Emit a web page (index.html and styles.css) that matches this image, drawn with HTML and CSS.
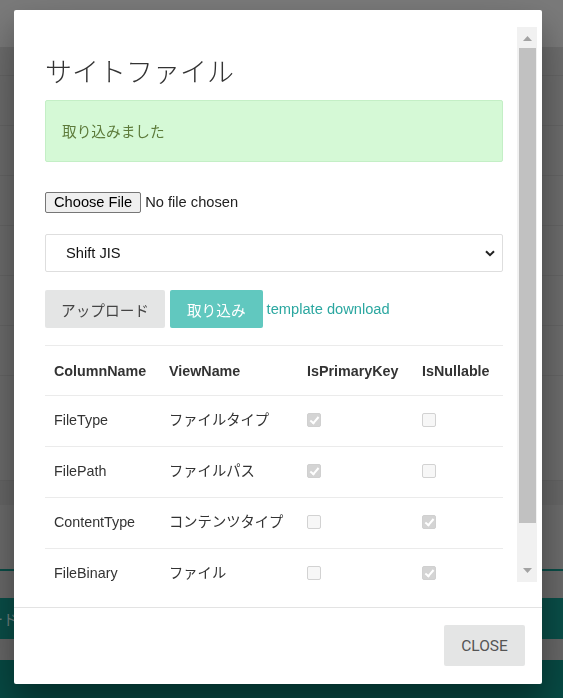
FILE: index.html
```html
<!DOCTYPE html>
<html lang="ja">
<head>
<meta charset="utf-8">
<title>サイトファイル</title>
<link rel="stylesheet" href="styles.css">
</head>
<body>
<div class="page">
  <div class="bg-header"></div>
  <div class="bg-row bg-row-short"></div>
  <div class="bg-row"></div>
  <div class="bg-row"></div>
  <div class="bg-row"></div>
  <div class="bg-row"></div>
  <div class="bg-row"></div>
  <div class="bg-row"></div>
  <div class="bg-gap"></div>
  <div class="bg-band"></div>
  <div class="bg-gap2"></div>
  <div class="bg-tealline"></div>
  <div class="bg-space"></div>
  <div class="bg-button"><span class="bg-button-text">アップロード</span></div>
  <div class="bg-space2"></div>
  <div class="bg-footer"></div>
</div>

<div class="modal">
  <div class="modal-body">
    <div class="scroll-content">
      <h4 class="modal-title">サイトファイル</h4>
      <div class="alert">取り込みました</div>
      <div class="file-row"><input type="file" class="file-input"></div>
      <div class="select-wrap">
        <select class="select">
          <option>Shift JIS</option>
          <option>UTF-8</option>
        </select>
        <svg class="select-arrow" width="10" height="7" viewBox="0 0 10 7"><path d="M1 1.2 L5 5.2 L9 1.2" fill="none" stroke="#222" stroke-width="2"/></svg>
      </div>
      <div class="actions">
        <button class="btn btn-grey">アップロード</button>
        <button class="btn btn-teal">取り込み</button>
        <a class="link" href="#">template download</a>
      </div>
      <table class="cols">
        <thead>
          <tr><th class="c1">ColumnName</th><th class="c2">ViewName</th><th class="c3">IsPrimaryKey</th><th class="c4">IsNullable</th></tr>
        </thead>
        <tbody>
          <tr><td>FileType</td><td>ファイルタイプ</td><td><input type="checkbox" class="cb" checked disabled></td><td><input type="checkbox" class="cb" disabled></td></tr>
          <tr><td>FilePath</td><td>ファイルパス</td><td><input type="checkbox" class="cb" checked disabled></td><td><input type="checkbox" class="cb" disabled></td></tr>
          <tr><td>ContentType</td><td>コンテンツタイプ</td><td><input type="checkbox" class="cb" disabled></td><td><input type="checkbox" class="cb" checked disabled></td></tr>
          <tr><td>FileBinary</td><td>ファイル</td><td><input type="checkbox" class="cb" disabled></td><td><input type="checkbox" class="cb" checked disabled></td></tr>
        </tbody>
      </table>
    </div>
    <div class="scrollbar" aria-hidden="true">
      <div class="sb-btn sb-up"><svg width="9" height="5" viewBox="0 0 9 5"><polygon points="0,5 4.5,0 9,5" fill="#a3a3a3"/></svg></div>
      <div class="sb-track"><div class="sb-thumb"></div></div>
      <div class="sb-btn sb-down"><svg width="9" height="5" viewBox="0 0 9 5"><polygon points="0,0 4.5,5 9,0" fill="#a3a3a3"/></svg></div>
    </div>
  </div>
  <div class="modal-footer">
    <button class="btn-close">Close</button>
  </div>
</div>
</body>
</html>
```

FILE: styles.css
```css
html, body {
  margin: 0;
  padding: 0;
}
body {
  width: 563px;
  height: 698px;
  overflow: hidden;
  background: #6d6d6d;
  font-family: "Liberation Sans", "Noto Sans CJK JP", sans-serif;
  font-size: 14.67px;
  color: #333;
}

/* dimmed page behind the modal */
.page {
  display: flex;
  flex-direction: column;
  height: 698px;
}
.bg-header {
  height: 47px;
  background: #7a7a7a;
  flex: none;
}
.bg-row {
  height: 49px;
  border-bottom: 1px solid #666;
  flex: none;
}
.bg-row-short {
  height: 28px;
}
.bg-gap {
  height: 104px;
  flex: none;
}
.bg-band {
  height: 24px;
  background: #686868;
  border-top: 1px solid #646464;
  flex: none;
}
.bg-gap2 {
  height: 64px;
  flex: none;
}
.bg-tealline {
  height: 2px;
  background: #0a4e48;
  flex: none;
}
.bg-space {
  height: 27px;
  background: #6a6a6a;
  flex: none;
}
.bg-button {
  height: 41px;
  background: #0a4f49;
  display: flex;
  align-items: center;
  overflow: hidden;
  flex: none;
}
.bg-button-text {
  margin-left: -72px;
  color: #6f8280;
  font-size: 15px;
  white-space: nowrap;
}
.bg-space2 {
  height: 21px;
  background: #686868;
  flex: none;
}
.bg-footer {
  flex: 1;
  background: #074a44;
}

/* modal */
.modal {
  position: fixed;
  left: 14px;
  top: 10px;
  width: 528px;
  height: 674px;
  background: #fff;
  border-radius: 2px;
  box-shadow: 0 16px 28px rgba(0, 0, 0, 0.22), 0 25px 55px rgba(0, 0, 0, 0.21);
  display: flex;
  flex-direction: column;
}
.modal-body {
  margin: 17px 5px 25px 0;
  height: 555px;
  flex: none;
  display: flex;
}
.scroll-content {
  flex: 1;
  min-width: 0;
  overflow: hidden;
  padding: 28px 14px 0 31px;
}

/* scrollbar drawn beside the clipped content */
.scrollbar {
  width: 20px;
  flex: none;
  background: #f1f1f1;
  display: flex;
  flex-direction: column;
}
.sb-btn {
  height: 20px;
  flex: none;
  display: flex;
  justify-content: center;
  box-sizing: border-box;
}
.sb-up {
  align-items: flex-start;
  padding-top: 9px;
}
.sb-down {
  align-items: flex-start;
  padding-top: 6px;
}
.sb-track {
  flex: 1;
  padding: 1px 1px 0 2px;
}
.sb-thumb {
  height: 475px;
  background: #c1c1c1;
}

.modal-title {
  margin: 0 0 13px;
  font-family: "Noto Sans CJK JP", sans-serif;
  font-weight: 300;
  font-size: 27px;
  line-height: 32px;
  color: #333;
}
.alert {
  background: #d5f9d6;
  border: 1px solid #c4efc6;
  border-radius: 2px;
  padding: 20px 16px;
  line-height: 20px;
  color: #5d7b3b;
  font-family: "Noto Sans CJK JP", sans-serif;
  font-size: 14.67px;
  margin-bottom: 30px;
}
.file-row {
  height: 21px;
  margin-bottom: 21px;
}
.file-input {
  font-family: "Liberation Sans", sans-serif;
  font-size: 14.67px;
  color: #222;
  line-height: 17px;
  margin: 0;
}
.file-input::file-selector-button {
  font-family: "Liberation Sans", sans-serif;
  font-size: 14.67px;
  line-height: 17px;
  padding: 1px 8px;
  margin: 0 4px 0 0;
  background: #efefef;
  border: 1px solid #767676;
  border-radius: 2px;
  color: #000;
}

.select-wrap {
  position: relative;
  margin-bottom: 18px;
}
.select {
  appearance: none;
  -webkit-appearance: none;
  display: block;
  width: 100%;
  height: 38px;
  box-sizing: border-box;
  border: 1px solid #dedede;
  border-radius: 2px;
  background: #fff;
  padding: 0 30px 0 20px;
  font-family: "Liberation Sans", sans-serif;
  font-size: 14.67px;
  color: #111;
  outline: none;
}
.select-arrow {
  position: absolute;
  right: 8px;
  top: 16px;
  pointer-events: none;
}

.actions {
  display: flex;
  align-items: center;
  gap: 5px;
  height: 38px;
  margin-bottom: 17px;
}
.btn {
  height: 38px;
  border: none;
  border-radius: 2px;
  font-family: "Noto Sans CJK JP", sans-serif;
  font-size: 14.67px;
  cursor: pointer;
}
.btn-grey {
  background: #e4e5e5;
  color: #444;
  padding: 0 16px;
}
.btn-teal {
  background: #61c8bf;
  color: #fff;
  padding: 0 17px;
}
.link {
  margin-left: -1px;
  color: #2ba7a0;
  text-decoration: none;
  font-family: "Liberation Sans", sans-serif;
  font-size: 14.67px;
}

.cols {
  width: 100%;
  border-collapse: collapse;
  table-layout: fixed;
}
.cols tr {
  border-top: 1px solid #ebebeb;
}
.cols th, .cols td {
  padding: 0 0 2px 9px;
  text-align: left;
  vertical-align: middle;
  white-space: nowrap;
  color: #333;
  line-height: 20px;
}
.cols th {
  height: 49px;
  padding-bottom: 0;
  font-weight: bold;
  font-size: 14.3px;
}
.cols td {
  height: 48px;
  font-size: 14.3px;
  font-family: "Liberation Sans", "Noto Sans CJK JP", sans-serif;
}
.c1 { width: 106px; }
.c2 { width: 129px; }
.c3 { width: 106px; }

.cb {
  appearance: none;
  -webkit-appearance: none;
  width: 14px;
  height: 14px;
  margin: 0;
  border: 1px solid #d2d2d2;
  border-radius: 2px;
  background: #f7f7f7;
  position: relative;
  vertical-align: middle;
  top: -1px;
}
.cb:checked {
  background: #d4d4d4;
  border-color: #d0d0d0;
}
.cb:checked::after {
  content: "";
  position: absolute;
  left: 4px;
  top: 1px;
  width: 3px;
  height: 7px;
  border-right: 2px solid #fff;
  border-bottom: 2px solid #fff;
  transform: rotate(40deg);
}

.modal-footer {
  flex: 1;
  border-top: 1px solid #e3e3e3;
  display: flex;
  justify-content: flex-end;
  align-items: flex-start;
  padding: 17px 17px 0 0;
}
.btn-close {
  height: 41px;
  width: 81px;
  border: none;
  border-radius: 2px;
  background: #e4e5e5;
  color: #555;
  font-family: Roboto, "Liberation Sans", sans-serif;
  font-size: 15.5px;
  text-transform: uppercase;
  cursor: pointer;
}
```
